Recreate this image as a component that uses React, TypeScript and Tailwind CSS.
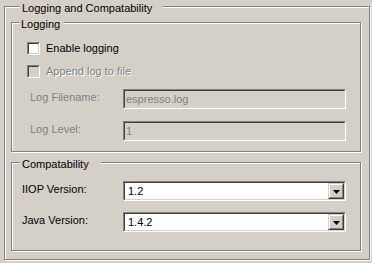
const face = "bg-[#d4d0c8]";

function GroupBox({
  title,
  titleIndent,
  className,
  children,
}: {
  title: string;
  titleIndent: string;
  className: string;
  children?: React.ReactNode;
}) {
  return (
    <div
      className={`border border-[#808080] shadow-[inset_1px_1px_0_#fff,1px_1px_0_#fff] ${className}`}
    >
      <div className={`-mt-[5px] ${titleIndent} w-fit pl-[2px] h-[13px] leading-[13px] text-black ${face}`}>
        {title}
      </div>
      {children}
    </div>
  );
}

function CheckBox({ disabled = false }: { disabled?: boolean }) {
  return (
    <div className="w-[13px] h-[13px] border border-t-[#808080] border-l-[#808080] border-b-white border-r-white">
      <div
        className={`w-full h-full border border-t-[#404040] border-l-[#404040] border-b-[#d4d0c8] border-r-[#d4d0c8] ${
          disabled ? face : "bg-white"
        }`}
      />
    </div>
  );
}

function Sunken({
  disabled = false,
  children,
}: {
  disabled?: boolean;
  children?: React.ReactNode;
}) {
  return (
    <div className="w-[223px] h-[20px] border border-t-[#808080] border-l-[#808080] border-b-white border-r-white">
      <div
        className={`w-full h-full flex items-center border border-t-[#404040] border-l-[#404040] border-b-[#d4d0c8] border-r-[#d4d0c8] ${
          disabled ? face : "bg-white"
        }`}
      >
        {children}
      </div>
    </div>
  );
}

function TextField({ value }: { value: string }) {
  return (
    <Sunken disabled>
      <span className="pl-[1px] leading-[13px] text-[#808080]">{value}</span>
    </Sunken>
  );
}

function Combo({ value }: { value: string }) {
  return (
    <Sunken>
      <span className="flex-1 pl-[3px] leading-[13px] text-black">{value}</span>
      <div className="w-[16px] h-full border border-t-[#d4d0c8] border-l-[#d4d0c8] border-b-[#404040] border-r-[#404040]">
        <div
          className={`w-full h-full flex items-center justify-center border border-t-white border-l-white border-b-[#808080] border-r-[#808080] ${face}`}
        >
          <svg width="7" height="4" viewBox="0 0 7 4" className="mt-[1px]">
            <path d="M0 0h7L3.5 4z" fill="#000" />
          </svg>
        </div>
      </div>
    </Sunken>
  );
}

function FieldRow({
  label,
  labelClass,
  children,
  className,
}: {
  label: string;
  labelClass: string;
  children: React.ReactNode;
  className: string;
}) {
  return (
    <div className={`flex items-center h-[20px] ${className}`}>
      <span className={`pb-[4px] leading-[13px] ${labelClass}`}>{label}</span>
      {children}
    </div>
  );
}

export default function App() {
  return (
    <div
      className={`w-[372px] h-[263px] ${face} pt-[6px] pl-[4px] text-[11px] overflow-hidden`}
      style={{ fontFamily: '"Liberation Sans", Arial, sans-serif' }}
    >
      <GroupBox
        title="Logging and Compatability"
        titleIndent="ml-[9px] pr-[11px]"
        className="w-[366px] h-[254px] pl-[6px] pr-[8px]"
      >
        <GroupBox
          title="Logging"
          titleIndent="ml-[7px] pr-[4px]"
          className="mt-[7px] w-[350px] h-[130px]"
        >
          <div className="mt-[11px] ml-[15px] flex items-center gap-[6px] h-[13px]">
            <CheckBox />
            <span className="leading-[13px] text-black">Enable logging</span>
          </div>
          <div className="mt-[10px] ml-[15px] flex items-center gap-[6px] h-[13px]">
            <CheckBox disabled />
            <span className="leading-[13px] text-[#808080] [text-shadow:1px_1px_0_#fff]">
              Append log to file
            </span>
          </div>
          <FieldRow
            label="Log Filename:"
            labelClass="ml-[18px] w-[93px] text-[#808080]"
            className="mt-[11px]"
          >
            <TextField value="espresso.log" />
          </FieldRow>
          <FieldRow
            label="Log Level:"
            labelClass="ml-[18px] w-[93px] text-[#808080]"
            className="mt-[12px]"
          >
            <TextField value="1" />
          </FieldRow>
        </GroupBox>

        <GroupBox
          title="Compatability"
          titleIndent="ml-[8px] pr-[12px]"
          className="mt-[10px] w-[350px] h-[89px]"
        >
          <FieldRow
            label="IIOP Version:"
            labelClass="ml-[10px] w-[101px] text-black"
            className="mt-[10px]"
          >
            <Combo value="1.2" />
          </FieldRow>
          <FieldRow
            label="Java Version:"
            labelClass="ml-[10px] w-[101px] text-black"
            className="mt-[11px]"
          >
            <Combo value="1.4.2" />
          </FieldRow>
        </GroupBox>
      </GroupBox>
    </div>
  );
}
